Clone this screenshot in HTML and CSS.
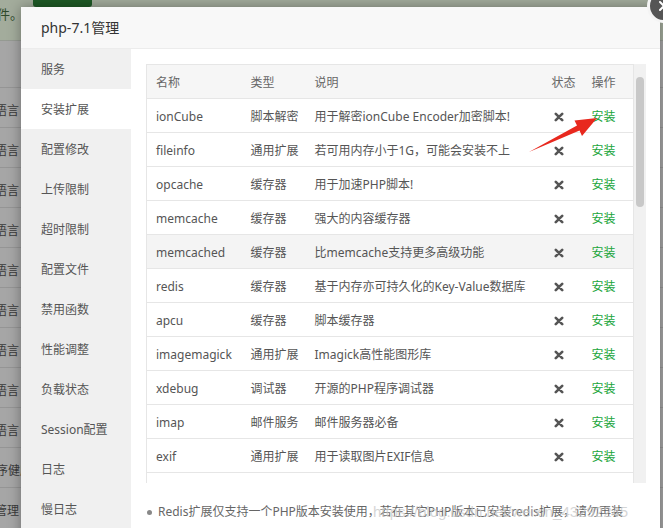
FILE: index.html
```html
<!DOCTYPE html>
<html lang="zh-CN">
<head>
<meta charset="utf-8">
<title>php-7.1管理</title>
<link rel="stylesheet" href="styles.css">
</head>
<body>
<div class="bg">
  <div class="bg-alert">
    <span class="bg-alert-text">件。</span>
    <span class="bg-btn"></span>
  </div>
  <ul class="bg-list">
    <li class="bg-row"></li>
    <li class="bg-row"><span class="bg-cell">语言</span></li>
    <li class="bg-row"><span class="bg-cell">语言</span></li>
    <li class="bg-row"><span class="bg-cell">语言</span></li>
    <li class="bg-row"><span class="bg-cell">语言</span></li>
    <li class="bg-row"><span class="bg-cell">语言</span></li>
    <li class="bg-row"><span class="bg-cell">语言</span></li>
    <li class="bg-row"><span class="bg-cell">语言</span></li>
    <li class="bg-row"><span class="bg-cell">语言</span></li>
    <li class="bg-row"><span class="bg-cell">语言</span></li>
    <li class="bg-row"><span class="bg-cell bg-cell--wide">程序健康</span></li>
    <li class="bg-row"><span class="bg-cell">管理</span></li>
  </ul>
</div>

<div class="modal">
  <div class="modal-title">php-7.1管理</div>
  <div class="modal-body">
    <ul class="side">
      <li class="side-item">服务</li>
      <li class="side-item is-active">安装扩展</li>
      <li class="side-item">配置修改</li>
      <li class="side-item">上传限制</li>
      <li class="side-item">超时限制</li>
      <li class="side-item">配置文件</li>
      <li class="side-item">禁用函数</li>
      <li class="side-item">性能调整</li>
      <li class="side-item">负载状态</li>
      <li class="side-item">Session配置</li>
      <li class="side-item">日志</li>
      <li class="side-item">慢日志</li>
    </ul>
    <div class="content">
      <div class="table-box">
        <div class="table-scroll">
          <table class="ext-table">
            <colgroup>
              <col class="c-name"><col class="c-type"><col class="c-desc"><col class="c-state"><col class="c-op">
            </colgroup>
            <thead>
              <tr><th>名称</th><th>类型</th><th>说明</th><th>状态</th><th>操作</th></tr>
            </thead>
            <tbody id="rows"></tbody>
          </table>
        </div>
        <div class="scrollbar"><div class="scrollbar-thumb"></div></div>
      </div>
      <ul class="notes">
        <li class="note">Redis扩展仅支持一个PHP版本安装使用，若在其它PHP版本已安装redis扩展，请勿再装</li>
      </ul>
    </div>
  </div>
  <span class="modal-close" aria-label="关闭">
    <svg viewBox="0 0 12 12" width="12" height="12"><path d="M2 2 L10 10 M10 2 L2 10" stroke="#fff" stroke-width="2" stroke-linecap="round"/></svg>
  </span>
</div>

<svg class="annot-arrow" width="80" height="50" viewBox="525 112 80 50">
  <polygon points="529,152 577,125.4 574.5,120.5 597,118 582,136 579.5,130.6" fill="#e8281e"/>
</svg>

<div class="watermark">https://blog.csdn.net/weixin_43292245</div>

<script src="app.js"></script>
</body>
</html>
```

FILE: app.js
```js
var exts = [
  ["ionCube","脚本解密","用于解密ionCube Encoder加密脚本!"],
  ["fileinfo","通用扩展","若可用内存小于1G，可能会安装不上"],
  ["opcache","缓存器","用于加速PHP脚本!"],
  ["memcache","缓存器","强大的内容缓存器"],
  ["memcached","缓存器","比memcache支持更多高级功能"],
  ["redis","缓存器","基于内存亦可持久化的Key-Value数据库"],
  ["apcu","缓存器","脚本缓存器"],
  ["imagemagick","通用扩展","Imagick高性能图形库"],
  ["xdebug","调试器","开源的PHP程序调试器"],
  ["imap","邮件服务","邮件服务器必备"],
  ["exif","通用扩展","用于读取图片EXIF信息"],
  ["intl","通用扩展","提供国际化支持"],
  ["xsl","通用扩展","xsl解析扩展"],
  ["swoole","通用扩展","异步、并行、高性能网络通信引擎"],
  ["mongodb","通用扩展","MongoDB驱动"]
];
var tbody = document.getElementById("rows");
var x = '<svg class="x-icon" viewBox="0 0 10 10" width="10" height="10"><path d="M1.8 1.8 L8.2 8.2 M8.2 1.8 L1.8 8.2" stroke="#555" stroke-width="2.6" stroke-linecap="round"/></svg>';
exts.forEach(function (e) {
  var tr = document.createElement("tr");
  if (e[0] === "memcached") tr.className = "is-hover";
  tr.innerHTML = "<td>" + e[0] + "</td><td>" + e[1] + "</td><td>" + e[2] + "</td><td class=\"state\">" + x + "</td><td><a class=\"op\">安装</a></td>";
  tbody.appendChild(tr);
});
```

FILE: styles.css
```css
* { box-sizing: border-box; }
html, body { margin: 0; padding: 0; }
body {
  width: 663px;
  height: 528px;
  overflow: hidden;
  position: relative;
  background: #a6a6a6;
  font-family: "Noto Sans", "Noto Sans CJK SC", sans-serif;
  font-size: 12px;
}
ul { margin: 0; padding: 0; list-style: none; }

/* background page under the overlay */
.bg-alert {
  height: 41px;
  background: #a3ac9c;
  position: relative;
  border-bottom: 1px solid #959a92;
}
.bg-alert-text {
  display: block;
  padding: 5px 0 0 0;
  margin-left: -3px;
  font-size: 13px;
  line-height: 18px;
  color: #2f4a2c;
}
.bg-btn {
  position: absolute;
  left: 33px;
  top: -4px;
  width: 59px;
  height: 11px;
  border-radius: 3px;
  background: #1e5a26;
}
.bg-list { margin-top: 6px; }
.bg-row {
  height: 40px;
  border-top: 1px solid #959595;
  display: flex;
  align-items: center;
  padding-top: 3px;
}
.bg-row:first-child { border-top: 0; }
.bg-cell {
  width: 19px;
  display: flex;
  justify-content: flex-end;
  white-space: nowrap;
  font-size: 12px;
  color: #3a3a3a;
  font-family: "Noto Sans CJK SC", sans-serif;
}
.bg-cell--wide { width: 32px; }

/* modal */
.modal {
  position: absolute;
  left: 21px;
  top: 7px;
  width: 639px;
  height: 560px;
  background: #fff;
  box-shadow: 0 0 12px rgba(0, 0, 0, 0.35);
}
.modal-title {
  height: 42px;
  line-height: 42px;
  padding-left: 20px;
  background: #f8f8f8;
  border-bottom: 1px solid #ececec;
  font-size: 14px;
  color: #333;
}
.modal-body { display: flex; }
.side {
  width: 110px;
  flex: none;
  background: #f0f0f0;
  height: 518px;
}
.side-item {
  height: 40px;
  line-height: 42px;
  padding-left: 20px;
  font-size: 12px;
  color: #555;
}
.side-item.is-active { background: #fff; }
.content {
  flex: 1;
  padding: 15px 15px 0;
}
.table-box {
  display: flex;
  height: 419px;
}
.table-scroll {
  flex: 1;
  overflow: hidden;
}
.scrollbar {
  width: 12px;
  flex: none;
  background: #f1f1f1;
  padding: 13px 2px 0;
}
.scrollbar-thumb {
  height: 130px;
  border-radius: 4px;
  background: #c8c8c8;
}

.ext-table {
  width: 487px;
  table-layout: fixed;
  border-collapse: collapse;
  border: 1px solid #e6e6e6;
  color: #555;
}
.c-name { width: 95px; }
.c-type { width: 64px; }
.c-desc { width: 237px; }
.c-state { width: 40px; }
.c-op { width: 51px; }
.ext-table th,
.ext-table td {
  height: 34px;
  padding: 2px 0 0 9px;
  text-align: left;
  font-weight: normal;
  white-space: nowrap;
  overflow: hidden;
  border-bottom: 1px solid #e6e6e6;
  vertical-align: middle;
  line-height: 16px;
}
.ext-table th {
  background: #f6f6f6;
  color: #666;
}
.ext-table tr.is-hover td { background: #f4f4f4; }
.ext-table td.state { padding-left: 11px; }
.x-icon { display: block; }
.op { color: #20a53a; }

.notes { margin-top: 21px; }
.note {
  display: flex;
  align-items: center;
  color: #666;
  font-size: 12px;
  line-height: 16px;
  white-space: nowrap;
}
.note::before {
  content: "";
  width: 5px;
  height: 5px;
  border-radius: 50%;
  background: #888;
  margin: 0 6px 0 1px;
}

.modal-close {
  position: absolute;
  left: 626px;
  top: -18px;
  width: 34px;
  height: 34px;
  border-radius: 50%;
  background: #555;
  border: 3px solid #f4f4f4;
  display: flex;
  align-items: center;
  justify-content: center;
}

.annot-arrow {
  position: absolute;
  left: 525px;
  top: 112px;
}
.watermark {
  position: absolute;
  left: 373px;
  top: 502px;
  font-size: 15px;
  line-height: 20px;
  color: rgba(200, 200, 200, 0.75);
  font-family: "Liberation Sans", sans-serif;
  white-space: nowrap;
}
```
